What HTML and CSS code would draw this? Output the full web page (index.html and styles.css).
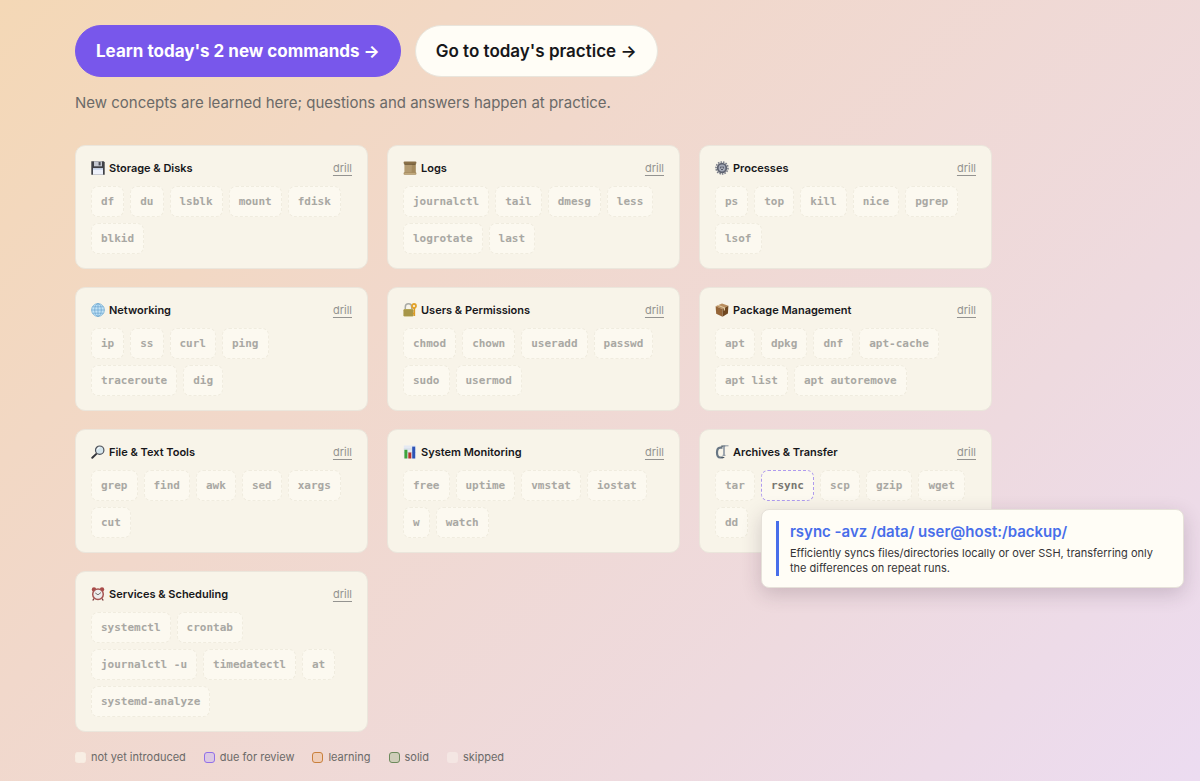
FILE: index.html
```html
<!DOCTYPE html>
<html lang="en">

<head>
    <meta charset="UTF-8">
    <meta name="viewport" content="width=device-width, initial-scale=1.0">
    <title>Linux commands</title>
    <link rel="stylesheet" href="styles.css">
</head>

<body>
    <main class="page">
        <div class="actions">
            <button class="btn btn-primary">Learn today's 2 new commands →</button>
            <button class="btn btn-light">Go to today's practice →</button>
        </div>
        <p class="note">New concepts are learned here; questions and answers happen at practice.</p>

        <div class="topics">
            <section class="card">
                <header class="card-head">
                    <svg class="icon" viewBox="0 0 14 14">
                        <path d="M0.3 0.3h12.4l1 1v12.4H0.3z" fill="#3f4147"/>
                        <path d="M3 0.3h8v5H3z" fill="#c3c7d0"/>
                        <path d="M7.6 1h2v3.4h-2z" fill="#4a4c55"/>
                        <path d="M2 7.3h10v6.4H2z" fill="#eef1fa"/>
                        <path d="M2 7.3h10v1.6H2z" fill="#cbd8ee"/>
                    </svg>
                    <h2>Storage &amp; Disks</h2>
                    <a href="#storage">drill</a>
                </header>
                <ul class="chips">
                    <li><button class="chip">df</button></li>
                    <li><button class="chip">du</button></li>
                    <li><button class="chip">lsblk</button></li>
                    <li><button class="chip">mount</button></li>
                    <li><button class="chip">fdisk</button></li>
                    <li><button class="chip">blkid</button></li>
                </ul>
            </section>

            <section class="card">
                <header class="card-head">
                    <svg class="icon" viewBox="0 0 14 14">
                        <path d="M1.4 2h11.200v10H1.400z" fill="#b39a70"/>
                        <path d="M9 3h3.600v9H8.500z" fill="#a58b5e"/>
                        <rect x="0.600" y="0.500" width="12.800" height="2.400" rx="1" fill="#8a7048"/>
                        <path d="M1.400 2.900h11.200v.7H1.400z" fill="#594628"/>
                        <rect x="0.600" y="11.300" width="12.800" height="2.400" rx="1" fill="#a88d60"/>
                        <path d="M1.500 12h11v.6h-11z" fill="#d2bd90"/>
                    </svg>
                    <h2>Logs</h2>
                    <a href="#logs">drill</a>
                </header>
                <ul class="chips">
                    <li><button class="chip">journalctl</button></li>
                    <li><button class="chip">tail</button></li>
                    <li><button class="chip">dmesg</button></li>
                    <li><button class="chip">less</button></li>
                    <li><button class="chip">logrotate</button></li>
                    <li><button class="chip">last</button></li>
                </ul>
            </section>

            <section class="card">
                <header class="card-head">
                    <svg class="icon" viewBox="0 0 14 14">
                        <circle cx="7" cy="7" r="6" fill="none" stroke="#777b87" stroke-width="1.600" stroke-dasharray="1.500 1.100"/>
                        <circle cx="7" cy="7" r="4.300" fill="#a5aab8" stroke="#5e6270" stroke-width="1.800"/>
                        <circle cx="7" cy="7" r="1.900" fill="#444856"/>
                        <path d="M7 5v2l2 1.500M7 7l-2 1.500" stroke="#d5d8e2" stroke-width=".8" fill="none"/>
                    </svg>
                    <h2>Processes</h2>
                    <a href="#processes">drill</a>
                </header>
                <ul class="chips">
                    <li><button class="chip">ps</button></li>
                    <li><button class="chip">top</button></li>
                    <li><button class="chip">kill</button></li>
                    <li><button class="chip">nice</button></li>
                    <li><button class="chip">pgrep</button></li>
                    <li><button class="chip">lsof</button></li>
                </ul>
            </section>

            <section class="card">
                <header class="card-head">
                    <svg class="icon" viewBox="0 0 14 14">
                        <circle cx="7" cy="7" r="6.400" fill="#c4e4f7" stroke="#76add3" stroke-width=".8"/>
                        <path d="M7 .6v12.800M.6 7h12.800M1.500 3.800h11M1.500 10.200h11" stroke="#6ba5cf" stroke-width=".7"/>
                        <ellipse cx="7" cy="7" rx="3.300" ry="6.400" fill="none" stroke="#6ba5cf" stroke-width=".7"/>
                    </svg>
                    <h2>Networking</h2>
                    <a href="#networking">drill</a>
                </header>
                <ul class="chips">
                    <li><button class="chip">ip</button></li>
                    <li><button class="chip">ss</button></li>
                    <li><button class="chip">curl</button></li>
                    <li><button class="chip">ping</button></li>
                    <li><button class="chip">traceroute</button></li>
                    <li><button class="chip">dig</button></li>
                </ul>
            </section>

            <section class="card">
                <header class="card-head">
                    <svg class="icon" viewBox="0 0 14 14">
                        <path d="M2.300 7V4a3 3 0 0 1 6.400 0v3" fill="none" stroke="#a9aaa5" stroke-width="1.500"/>
                        <rect x="0.500" y="6" width="10" height="7.500" rx="1.200" fill="#b5a552"/>
                        <path d="M.5 8h10M.5 10h10M.5 12h10" stroke="#8d7d37" stroke-width=".7"/>
                        <circle cx="11" cy="3" r="2" fill="none" stroke="#e2a32c" stroke-width="1.800"/>
                        <path d="M11.400 5v8M11.400 10.500h-1.700" stroke="#dc9b24" stroke-width="1.500"/>
                    </svg>
                    <h2>Users &amp; Permissions</h2>
                    <a href="#users">drill</a>
                </header>
                <ul class="chips">
                    <li><button class="chip">chmod</button></li>
                    <li><button class="chip">chown</button></li>
                    <li><button class="chip">useradd</button></li>
                    <li><button class="chip">passwd</button></li>
                    <li><button class="chip">sudo</button></li>
                    <li><button class="chip">usermod</button></li>
                </ul>
            </section>

            <section class="card">
                <header class="card-head">
                    <svg class="icon" viewBox="0 0 14 14">
                        <path d="M.6 3.200 7 .4l6.400 2.400L7.500 6z" fill="#b98d5e"/>
                        <path d="M.6 3.200 7.500 6v7.800L1.200 10.800z" fill="#946437"/>
                        <path d="M13.400 2.800 7.500 6v7.800l5.400-3.300z" fill="#70471f"/>
                        <path d="M3.500 2 10 4.600v2.600l-1.200.6V5.300L2.300 2.600z" fill="#e0c9a0"/>
                    </svg>
                    <h2>Package Management</h2>
                    <a href="#packages">drill</a>
                </header>
                <ul class="chips">
                    <li><button class="chip">apt</button></li>
                    <li><button class="chip">dpkg</button></li>
                    <li><button class="chip">dnf</button></li>
                    <li><button class="chip">apt-cache</button></li>
                    <li><button class="chip">apt list</button></li>
                    <li><button class="chip">apt autoremove</button></li>
                </ul>
            </section>

            <section class="card">
                <header class="card-head">
                    <svg class="icon" viewBox="0 0 14 14">
                        <path d="M5.600 8.600 1.300 12.700" stroke="#33343a" stroke-width="2" stroke-linecap="round"/>
                        <circle cx="8.700" cy="5.200" r="4.200" fill="#d5e5ec" stroke="#4f525a" stroke-width="1.200"/>
                        <path d="M6.200 4.600a2.800 2.800 0 0 1 2.500-2" stroke="#fff" fill="none"/>
                    </svg>
                    <h2>File &amp; Text Tools</h2>
                    <a href="#files">drill</a>
                </header>
                <ul class="chips">
                    <li><button class="chip">grep</button></li>
                    <li><button class="chip">find</button></li>
                    <li><button class="chip">awk</button></li>
                    <li><button class="chip">sed</button></li>
                    <li><button class="chip">xargs</button></li>
                    <li><button class="chip">cut</button></li>
                </ul>
            </section>

            <section class="card">
                <header class="card-head">
                    <svg class="icon" viewBox="0 0 14 14">
                        <path d="M.8.5h12v13H.8z" fill="#e4e9f2"/>
                        <path d="M.8 4h12M.8 7.500h12" stroke="#c2cbdc" stroke-width=".5"/>
                        <path d="M1.400 4.800h3v8.700h-3z" fill="#3fa43a"/>
                        <path d="M5.300 7.500h3v6h-3z" fill="#b9352c"/>
                        <path d="M9.200 1.600h3v11.900h-3z" fill="#2d53b5"/>
                    </svg>
                    <h2>System Monitoring</h2>
                    <a href="#monitoring">drill</a>
                </header>
                <ul class="chips">
                    <li><button class="chip">free</button></li>
                    <li><button class="chip">uptime</button></li>
                    <li><button class="chip">vmstat</button></li>
                    <li><button class="chip">iostat</button></li>
                    <li><button class="chip">w</button></li>
                    <li><button class="chip">watch</button></li>
                </ul>
            </section>

            <section class="card">
                <header class="card-head">
                    <svg class="icon" viewBox="0 0 14 14">
                        <path d="M7.500 2.600H5.300C3 2.600 2 4.400 2 7.500s1 5 3.300 5h2.900" fill="none" stroke="#687684" stroke-width="2.200"/>
                        <path d="M6.300 1.200h3.900M6.300 12.500h3" stroke="#495662" stroke-width="1.200"/>
                        <path d="M9 1v9.500" stroke="#8994a0" stroke-width="1.600"/>
                        <path d="M7.500 10.300h3M8.500.8h5" stroke="#8994a0" stroke-width="1"/>
                    </svg>
                    <h2>Archives &amp; Transfer</h2>
                    <a href="#archives">drill</a>
                </header>
                <ul class="chips">
                    <li><button class="chip">tar</button></li>
                    <li>
                        <button class="chip active" aria-describedby="tip-rsync">rsync</button>
                        <div class="tip" id="tip-rsync" role="tooltip">
                            <div class="tip-body">
                                <strong>rsync -avz /data/ user@host:/backup/</strong>
                                <p>Efficiently syncs files/directories locally or over SSH, transferring only the differences on repeat runs.</p>
                            </div>
                        </div>
                    </li>
                    <li><button class="chip">scp</button></li>
                    <li><button class="chip">gzip</button></li>
                    <li><button class="chip">wget</button></li>
                    <li><button class="chip">dd</button></li>
                </ul>
            </section>

            <section class="card">
                <header class="card-head">
                    <svg class="icon" viewBox="0 0 14 14">
                        <path d="M3 11.500 1.800 13.500M11 11.500l1.200 2" stroke="#7d4040" stroke-width="1.400"/>
                        <circle cx="3" cy="2.500" r="2.200" fill="#a94a48"/>
                        <circle cx="11" cy="2.500" r="2.200" fill="#a94a48"/>
                        <circle cx="7" cy="7.300" r="5.300" fill="#eeeceb" stroke="#a65452" stroke-width="1.500"/>
                        <path d="M4.300 6 7 7.800l3-2.300" stroke="#55504f" stroke-width=".8" fill="none"/>
                    </svg>
                    <h2>Services &amp; Scheduling</h2>
                    <a href="#services">drill</a>
                </header>
                <ul class="chips">
                    <li><button class="chip">systemctl</button></li>
                    <li><button class="chip">crontab</button></li>
                    <li><button class="chip">journalctl -u</button></li>
                    <li><button class="chip">timedatectl</button></li>
                    <li><button class="chip">at</button></li>
                    <li><button class="chip">systemd-analyze</button></li>
                </ul>
            </section>
        </div>

        <ul class="legend">
            <li><span class="swatch new"></span>not yet introduced</li>
            <li><span class="swatch due"></span>due for review</li>
            <li><span class="swatch learning"></span>learning</li>
            <li><span class="swatch solid"></span>solid</li>
            <li><span class="swatch skipped"></span>skipped</li>
        </ul>
    </main>
</body>

</html>
```
FILE: styles.css
```css
* {
    box-sizing: border-box;
}

body {
    min-height: 100vh;
    margin: 0;
    font-family: Inter, "Liberation Sans", sans-serif;
    color: #17171a;
    background: linear-gradient(135deg, #f4d8b6 0%, #f1d8cb 35%, #eedadf 72%, #ecdcf1 100%);
}

h2,
p,
ul {
    margin: 0;
    padding: 0;
}

ul {
    list-style: none;
}

.page {
    max-width: 992px;
    padding: 25px 0 12px 75px;
}

.actions {
    display: flex;
    flex-wrap: wrap;
    gap: 14px;
}

.btn {
    height: 52px;
    padding: 0 20px;
    font-family: inherit;
    font-size: 17px;
    font-weight: 600;
    border: 1px solid #e9e5dc;
    border-radius: 26px;
    cursor: pointer;
}

.btn-primary {
    color: #ffffff;
    font-weight: 700;
    background: #7857eb;
    border-color: #7857eb;
}

.btn-light {
    color: #17171a;
    background: #fffdf6;
}

.note {
    margin-top: 16px;
    font-size: 15px;
    line-height: 20px;
    color: #6b6a68;
}

.topics {
    display: grid;
    grid-template-columns: repeat(auto-fill, minmax(280px, 1fr));
    gap: 18px 19px;
    align-items: start;
    margin-top: 32px;
}

.card {
    padding: 14px 15px;
    background: #f8f4e9;
    border: 1px solid #ebe6dc;
    border-radius: 10px;
}

.card-head {
    display: flex;
    align-items: center;
    height: 16px;
    margin-bottom: 10px;
}

.icon {
    width: 14px;
    height: 14px;
    margin-right: 4px;
}

.card-head h2 {
    font-size: 11px;
    font-weight: 600;
}

.card-head a {
    margin-left: auto;
    font-size: 11px;
    color: #949390;
    text-underline-offset: 3px;
}

.chips {
    display: flex;
    flex-wrap: wrap;
    gap: 6px;
}

.chips li {
    position: relative;
}

.chip {
    display: block;
    height: 31px;
    padding: 0 9px;
    font-family: "DejaVu Sans Mono", "Liberation Mono", monospace;
    font-size: 11px;
    font-weight: 700;
    color: #a9a8a3;
    background: #fcf9f0;
    border: 1px dashed #f0ecdf;
    border-radius: 7px;
    cursor: pointer;
}

.chip.active {
    color: #777671;
    border-color: #af9bee;
}

/* command preview under the chip */
.tip {
    position: absolute;
    top: calc(100% + 8px);
    left: 0;
    z-index: 2;
    width: 423px;
    padding: 11px 14px;
    background: #fffdf6;
    border: 1px solid #e6e1d9;
    border-radius: 8px;
    box-shadow: 0 6px 20px rgba(60, 40, 60, 0.2);
}

.tip-body {
    padding-left: 11px;
    border-left: 3px solid #486eea;
}

.tip strong {
    display: block;
    margin-bottom: 3px;
    font-size: 15px;
    font-weight: 600;
    line-height: 22px;
    color: #486eea;
}

.tip p {
    font-size: 11px;
    line-height: 15px;
    color: #353436;
}

.legend {
    display: flex;
    flex-wrap: wrap;
    gap: 18px;
    margin-top: 17px;
    font-size: 11px;
    line-height: 16px;
    color: #6b6a68;
}

.legend li {
    display: flex;
    align-items: center;
    gap: 5px;
}

.swatch {
    width: 11px;
    height: 11px;
    border: 1px solid transparent;
    border-radius: 3px;
}

.new {
    background: #f8eee4;
    border: 1px dashed #f7ebe0;
}

.due {
    background: #dcc8e2;
    border-color: #9270e8;
}

.learning {
    background: #efcdb8;
    border-color: #c9803c;
}

.solid {
    background: #cfcdb9;
    border-color: #6d8a5c;
}

.skipped {
    background: #f4e6e3;
}
```
